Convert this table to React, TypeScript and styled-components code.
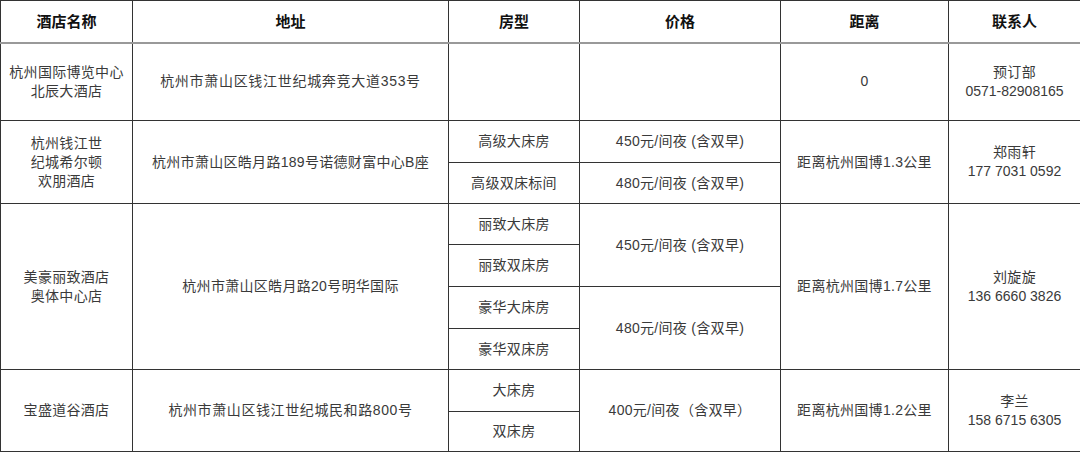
import React from 'react'
import styled, { createGlobalStyle, css } from 'styled-components'

const GlobalStyle = createGlobalStyle`
  body {
    margin: 0;
    background: #fff;
    font-family: "Liberation Sans", "Noto Sans CJK SC", sans-serif;
  }
`

const Table = styled.table`
  width: 1080px;
  border-collapse: collapse;
  table-layout: fixed;
  color: #3a3a3a;
  font-size: 14px;
  line-height: 19px;
`

const HeadRow = styled.tr`
  height: 42px;
`

const Row = styled.tr<{ $h: number }>`
  height: ${p => p.$h}px;
`

const HeadCell = styled.th`
  border: 1px solid #333;
  border-bottom: 2px solid #999;
  padding: 0;
  font-size: 15px;
  font-weight: bold;
  color: #111;
  text-align: center;
`

const Cell = styled.td<{ $soft?: boolean; $spacing?: number }>`
  border: 1px solid #333;
  padding: 0 4px;
  text-align: center;
  vertical-align: middle;
  letter-spacing: ${p => p.$spacing ?? 0.3}px;
  ${p =>
    p.$soft &&
    css`
      border-top-color: #888;
    `}
`

const Phone = styled.span`
  letter-spacing: 0;
`

const Lines = ({ text }: { text: string }) => (
  <>
    {text.split('\n').map((t, i) => (
      <React.Fragment key={i}>
        {i > 0 && <br />}
        {t}
      </React.Fragment>
    ))}
  </>
)

const Contact = ({ name, phone }: { name: string; phone: string }) => (
  <>
    {name}
    <br />
    <Phone>{phone}</Phone>
  </>
)

const widths = [132, 316, 131, 201, 168, 132]

export default function App() {
  return (
    <>
      <GlobalStyle />
      <Table>
        <colgroup>
          {widths.map((w, i) => (
            <col key={i} style={{ width: w }} />
          ))}
        </colgroup>
        <thead>
          <HeadRow>
            <HeadCell>酒店名称</HeadCell>
            <HeadCell>地址</HeadCell>
            <HeadCell>房型</HeadCell>
            <HeadCell>价格</HeadCell>
            <HeadCell>距离</HeadCell>
            <HeadCell>联系人</HeadCell>
          </HeadRow>
        </thead>
        <tbody>
          <Row $h={78}>
            <Cell>
              <Lines text={'杭州国际博览中心\n北辰大酒店'} />
            </Cell>
            <Cell $spacing={0.7}>杭州市萧山区钱江世纪城奔竞大道353号</Cell>
            <Cell />
            <Cell />
            <Cell>0</Cell>
            <Cell>
              <Contact name="预订部" phone="0571-82908165" />
            </Cell>
          </Row>

          <Row $h={42}>
            <Cell rowSpan={2}>
              <Lines text={'杭州钱江世\n纪城希尔顿\n欢朋酒店'} />
            </Cell>
            <Cell rowSpan={2}>杭州市萧山区皓月路189号诺德财富中心B座</Cell>
            <Cell>高级大床房</Cell>
            <Cell>450元/间夜 (含双早)</Cell>
            <Cell rowSpan={2}>距离杭州国博1.3公里</Cell>
            <Cell rowSpan={2}>
              <Contact name="郑雨轩" phone="177 7031 0592" />
            </Cell>
          </Row>
          <Row $h={41}>
            <Cell $soft>高级双床标间</Cell>
            <Cell>480元/间夜 (含双早)</Cell>
          </Row>

          <Row $h={41}>
            <Cell rowSpan={4}>
              <Lines text={'美豪丽致酒店\n奥体中心店'} />
            </Cell>
            <Cell rowSpan={4}>杭州市萧山区皓月路20号明华国际</Cell>
            <Cell>丽致大床房</Cell>
            <Cell rowSpan={2}>450元/间夜 (含双早)</Cell>
            <Cell rowSpan={4}>距离杭州国博1.7公里</Cell>
            <Cell rowSpan={4}>
              <Contact name="刘旋旋" phone="136 6660 3826" />
            </Cell>
          </Row>
          <Row $h={42}>
            <Cell $soft>丽致双床房</Cell>
          </Row>
          <Row $h={42}>
            <Cell>豪华大床房</Cell>
            <Cell rowSpan={2}>480元/间夜 (含双早)</Cell>
          </Row>
          <Row $h={41}>
            <Cell $soft>豪华双床房</Cell>
          </Row>

          <Row $h={42}>
            <Cell rowSpan={2}>宝盛道谷酒店</Cell>
            <Cell rowSpan={2} $spacing={0.6}>
              杭州市萧山区钱江世纪城民和路800号
            </Cell>
            <Cell>大床房</Cell>
            <Cell rowSpan={2}>400元/间夜（含双早）</Cell>
            <Cell rowSpan={2}>距离杭州国博1.2公里</Cell>
            <Cell rowSpan={2}>
              <Contact name="李兰" phone="158 6715 6305" />
            </Cell>
          </Row>
          <Row $h={40}>
            <Cell $soft>双床房</Cell>
          </Row>
        </tbody>
      </Table>
    </>
  )
}
